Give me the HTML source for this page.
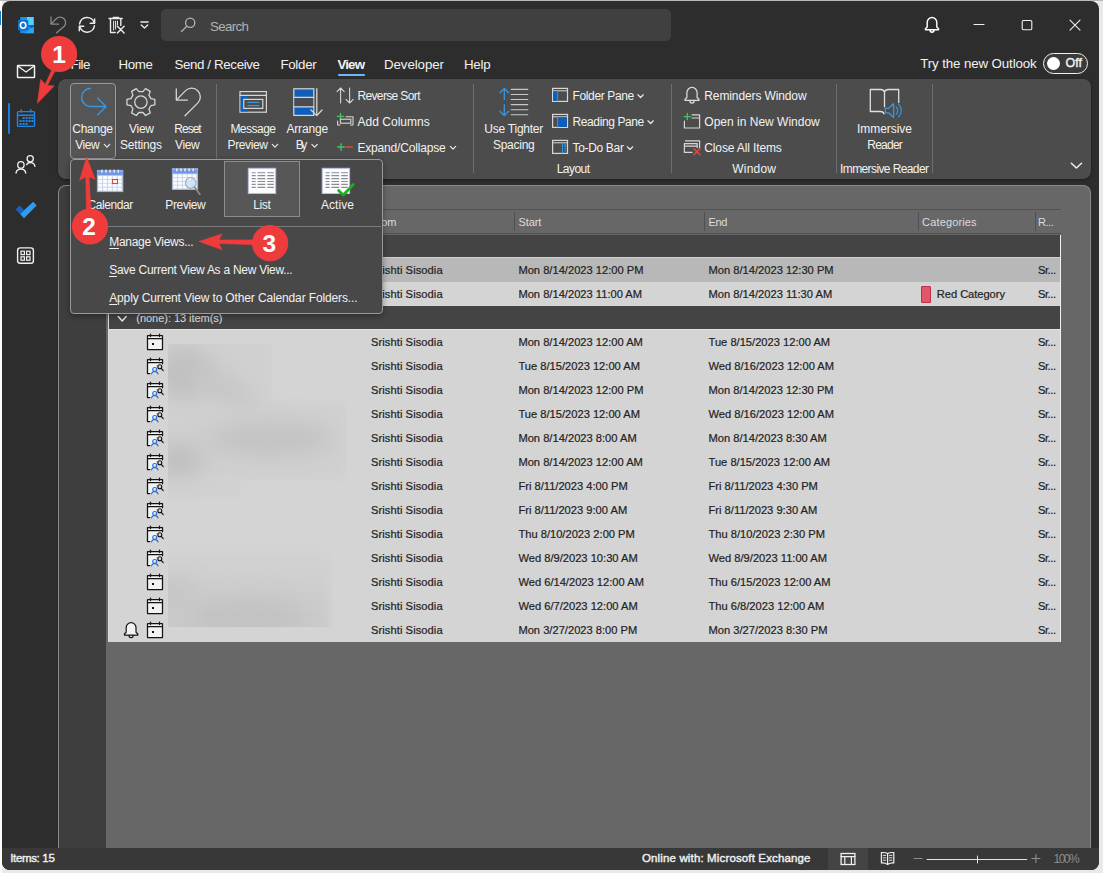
<!DOCTYPE html>
<html><head><meta charset="utf-8"><title>Outlook</title><style>
*{margin:0;padding:0;box-sizing:border-box}
html,body{width:1103px;height:873px;overflow:hidden;background:#e9e9e9;font-family:"Liberation Sans",sans-serif}
.a{position:absolute}
.t{position:absolute;white-space:pre}
u{text-decoration:underline;text-underline-offset:1.5px}
svg{position:absolute;left:0;top:0;overflow:visible}
</style></head><body>
<div class="a" style="left:0;top:0;width:2px;height:873px;background:#fdfdfd"></div>
<div class="a" style="left:0;top:11px;width:1px;height:14px;background:#1279c4"></div>
<div class="a" style="left:0;top:0;width:1103px;height:1px;background:#b9b9b9"></div>
<div class="a" style="left:2px;top:1px;width:1097px;height:869px;border-radius:8px;background:#2d2d2d;overflow:hidden">
<div class="a" style="left:-2px;top:-1px;width:1103px;height:873px">
<div class="a" style="left:58px;top:79px;width:1033px;height:100px;background:#4c4c4c;border-radius:8px;box-shadow:0 1px 3px rgba(0,0,0,.4)"></div>
<div class="a" style="left:216px;top:84px;width:1px;height:89px;background:#6e6e6e;"></div>
<div class="a" style="left:473px;top:84px;width:1px;height:89px;background:#6e6e6e;"></div>
<div class="a" style="left:671px;top:84px;width:1px;height:89px;background:#6e6e6e;"></div>
<div class="a" style="left:836px;top:84px;width:1px;height:89px;background:#6e6e6e;"></div>
<div class="a" style="left:932px;top:84px;width:1px;height:89px;background:#6e6e6e;"></div>
<div class="a" style="left:70px;top:83px;width:46px;height:76px;background:#555555;border:1px solid #9a9a9a;border-radius:4px"></div>
<div class="a" style="left:161px;top:9px;width:510px;height:32px;background:#404040;border-radius:5px"></div>
<div class="a" style="left:337.5px;top:74px;width:27.5px;height:2px;background:#6cb8f6;border-radius:1px"></div>
<div class="a" style="left:1043px;top:53px;width:45px;height:21px;background:#3a3a3a;border:1.5px solid #f0f0f0;border-radius:11px"></div>
<div class="a" style="left:1046.5px;top:57px;width:13px;height:13px;background:#ffffff;border-radius:7px"></div>
<div class="a" style="left:8px;top:102.5px;width:2px;height:31px;background:#1a7fdc;border-radius:1px"></div>
<div class="a" style="left:58px;top:185px;width:1033px;height:664px;background:#676767;border:1px solid #8a8a8a;border-bottom:none;border-radius:8px 8px 0 0"></div>
<div class="a" style="left:59px;top:196px;width:47px;height:652px;background:#3e3e3e;"></div>
<div class="a" style="left:59px;top:186px;width:47px;height:20px;background:#3e3e3e;border-radius:7px 0 0 0"></div>
<div class="a" style="left:108px;top:209px;width:953px;height:1px;background:#505050;"></div>
<div class="a" style="left:108px;top:233px;width:953px;height:1px;background:#505050;"></div>
<div class="a" style="left:366.5px;top:212px;width:1px;height:19px;background:#505050;"></div>
<div class="a" style="left:514px;top:212px;width:1px;height:19px;background:#505050;"></div>
<div class="a" style="left:704px;top:212px;width:1px;height:19px;background:#505050;"></div>
<div class="a" style="left:918px;top:212px;width:1px;height:19px;background:#505050;"></div>
<div class="a" style="left:1035px;top:212px;width:1px;height:19px;background:#505050;"></div>
<div class="a" style="left:108px;top:235px;width:953px;height:22px;background:#444444;"></div>
<div class="a" style="left:108px;top:257px;width:953px;height:25px;background:#b8b8b8;"></div>
<div class="a" style="left:108px;top:257px;width:953px;height:1px;background:#cfcfcf;"></div>
<div class="a" style="left:108px;top:282px;width:953px;height:24px;background:#d4d4d4;"></div>
<div class="a" style="left:108px;top:306px;width:953px;height:23px;background:#444444;"></div>
<div class="a" style="left:108px;top:329px;width:953px;height:313px;background:#d4d4d4;"></div>
<div class="a" style="left:108px;top:329px;width:953px;height:1px;background:#e2e2e2;"></div>
<div class="a" style="left:108px;top:235px;width:1px;height:407px;background:#dcdcdc;"></div>
<div class="a" style="left:1060px;top:235px;width:1px;height:407px;background:#f0f0f0;"></div>
<div class="a" style="left:921px;top:286px;width:10px;height:17px;background:#e2566a;border:1px solid #c22f4a;border-radius:1px"></div>
<div class="a" style="left:2px;top:848px;width:1097px;height:23px;background:#383838;"></div>
<div class="a" style="left:828px;top:848px;width:40px;height:23px;background:#444444;"></div>
<div class="a" style="left:168px;top:344px;width:180px;height:157px;overflow:hidden">
<div class="a" style="left:-10px;top:-10px;width:114px;height:80px;background:#d0d0d0;filter:blur(3px)"></div>
<div class="a" style="left:-10px;top:58px;width:188px;height:78px;background:#d0d0d0;filter:blur(3px)"></div>
<div class="a" style="left:-10px;top:130px;width:82px;height:25px;background:#d1d1d1;filter:blur(3px)"></div>
<div class="a" style="left:-12px;top:4px;width:56px;height:50px;background:#bfbfbf;filter:blur(10px);border-radius:50%"></div>
<div class="a" style="left:10px;top:28px;width:80px;height:26px;background:#c6c6c6;filter:blur(10px);border-radius:50%;transform:rotate(24deg)"></div>
<div class="a" style="left:40px;top:80px;width:125px;height:30px;background:#c1c1c1;filter:blur(11px);border-radius:50%"></div>
<div class="a" style="left:-14px;top:98px;width:50px;height:36px;background:#c0c0c0;filter:blur(10px);border-radius:50%"></div>
</div>
<div class="a" style="left:168px;top:540px;width:165px;height:87px;overflow:hidden">
<div class="a" style="left:-10px;top:6px;width:172px;height:100px;background:linear-gradient(#d3d3d3,#cdcdcd 50%,#c9c9c9);filter:blur(3px)"></div>
<div class="a" style="left:20px;top:58px;width:120px;height:40px;background:#c2c2c2;filter:blur(11px);border-radius:50%"></div>
<div class="a" style="left:-16px;top:36px;width:44px;height:40px;background:#c6c6c6;filter:blur(10px);border-radius:50%"></div>
</div>
<span class="t" style="left:210.0px;top:17.89px;font-size:13.3px;line-height:17px;color:#b2b2b2;letter-spacing:-0.628px">Search</span>
<span class="t" style="left:70.6px;top:56.19px;font-size:13.3px;line-height:17px;color:#f2f2f2;letter-spacing:-0.546px">File</span>
<span class="t" style="left:118.6px;top:56.19px;font-size:13.3px;line-height:17px;color:#f2f2f2;letter-spacing:-0.361px">Home</span>
<span class="t" style="left:174.4px;top:56.19px;font-size:13.3px;line-height:17px;color:#f2f2f2;letter-spacing:-0.353px">Send / Receive</span>
<span class="t" style="left:280.4px;top:56.19px;font-size:13.3px;line-height:17px;color:#f2f2f2;letter-spacing:-0.281px">Folder</span>
<span class="t" style="left:337.4px;top:56.19px;font-size:13.3px;line-height:17px;color:#f2f2f2;letter-spacing:-0.821px;font-weight:700">View</span>
<span class="t" style="left:384.0px;top:56.19px;font-size:13.3px;line-height:17px;color:#f2f2f2;letter-spacing:-0.076px">Developer</span>
<span class="t" style="left:464.0px;top:56.19px;font-size:13.3px;line-height:17px;color:#f2f2f2;letter-spacing:-0.253px">Help</span>
<span class="t" style="left:920.3px;top:54.69px;font-size:13.3px;line-height:17px;color:#f2f2f2;letter-spacing:-0.117px">Try the new Outlook</span>
<span class="t" style="left:1065.5px;top:55.47px;font-size:12.5px;line-height:16px;color:#f2f2f2;letter-spacing:0.023px;-webkit-text-stroke:0.4px #f2f2f2">Off</span>
<span class="t" style="left:72.3px;top:120.64px;font-size:12px;line-height:16px;color:#f2f2f2;letter-spacing:-0.269px">Change</span>
<span class="t" style="left:75.3px;top:136.54px;font-size:12px;line-height:16px;color:#f2f2f2;letter-spacing:-0.466px">View</span>
<span class="t" style="left:129.0px;top:120.64px;font-size:12px;line-height:16px;color:#f2f2f2;letter-spacing:-0.266px">View</span>
<span class="t" style="left:120.0px;top:136.54px;font-size:12px;line-height:16px;color:#f2f2f2;letter-spacing:-0.194px">Settings</span>
<span class="t" style="left:174.3px;top:120.64px;font-size:12px;line-height:16px;color:#f2f2f2;letter-spacing:-0.990px">Reset</span>
<span class="t" style="left:175.0px;top:136.54px;font-size:12px;line-height:16px;color:#f2f2f2;letter-spacing:-0.399px">View</span>
<span class="t" style="left:230.4px;top:120.64px;font-size:12px;line-height:16px;color:#f2f2f2;letter-spacing:-0.517px">Message</span>
<span class="t" style="left:227.6px;top:136.54px;font-size:12px;line-height:16px;color:#f2f2f2;letter-spacing:-0.398px">Preview</span>
<span class="t" style="left:286.4px;top:120.64px;font-size:12px;line-height:16px;color:#f2f2f2;letter-spacing:-0.134px">Arrange</span>
<span class="t" style="left:295.7px;top:136.54px;font-size:12px;line-height:16px;color:#f2f2f2;letter-spacing:-2.416px">By</span>
<span class="t" style="left:357.4px;top:87.94px;font-size:12px;line-height:16px;color:#f2f2f2;letter-spacing:-0.630px">Reverse Sort</span>
<span class="t" style="left:357.4px;top:113.74px;font-size:12px;line-height:16px;color:#f2f2f2;letter-spacing:0.035px">Add Columns</span>
<span class="t" style="left:357.4px;top:139.74px;font-size:12px;line-height:16px;color:#f2f2f2;letter-spacing:-0.167px">Expand/Collapse</span>
<span class="t" style="left:484.3px;top:120.64px;font-size:12px;line-height:16px;color:#f2f2f2;letter-spacing:-0.236px">Use Tighter</span>
<span class="t" style="left:492.9px;top:136.54px;font-size:12px;line-height:16px;color:#f2f2f2;letter-spacing:-0.246px">Spacing</span>
<span class="t" style="left:572.5px;top:87.84px;font-size:12px;line-height:16px;color:#f2f2f2;letter-spacing:-0.367px">Folder Pane</span>
<span class="t" style="left:572.5px;top:113.84px;font-size:12px;line-height:16px;color:#f2f2f2;letter-spacing:-0.388px">Reading Pane</span>
<span class="t" style="left:572.5px;top:139.94px;font-size:12px;line-height:16px;color:#f2f2f2;letter-spacing:-0.329px">To-Do Bar</span>
<span class="t" style="left:556.7px;top:161.04px;font-size:12px;line-height:16px;color:#f2f2f2;letter-spacing:-0.546px">Layout</span>
<span class="t" style="left:704.3px;top:87.84px;font-size:12px;line-height:16px;color:#f2f2f2;letter-spacing:-0.116px">Reminders Window</span>
<span class="t" style="left:704.3px;top:113.84px;font-size:12px;line-height:16px;color:#f2f2f2;letter-spacing:0.006px">Open in New Window</span>
<span class="t" style="left:704.3px;top:139.84px;font-size:12px;line-height:16px;color:#f2f2f2;letter-spacing:-0.133px">Close All Items</span>
<span class="t" style="left:732.3px;top:161.04px;font-size:12px;line-height:16px;color:#f2f2f2;letter-spacing:0.203px">Window</span>
<span class="t" style="left:857.0px;top:120.84px;font-size:12px;line-height:16px;color:#f2f2f2;letter-spacing:-0.043px">Immersive</span>
<span class="t" style="left:867.3px;top:136.64px;font-size:12px;line-height:16px;color:#f2f2f2;letter-spacing:-0.772px">Reader</span>
<span class="t" style="left:840.0px;top:161.04px;font-size:12px;line-height:16px;color:#f2f2f2;letter-spacing:-0.602px">Immersive Reader</span>
<span class="t" style="left:371.0px;top:214.69px;font-size:11px;line-height:14px;color:#dcdcdc;letter-spacing:-0.124px">From</span>
<span class="t" style="left:518.4px;top:214.69px;font-size:11px;line-height:14px;color:#dcdcdc;letter-spacing:-0.059px">Start</span>
<span class="t" style="left:708.5px;top:214.69px;font-size:11px;line-height:14px;color:#dcdcdc;letter-spacing:-0.339px">End</span>
<span class="t" style="left:922.1px;top:214.69px;font-size:11px;line-height:14px;color:#dcdcdc;letter-spacing:0.144px">Categories</span>
<span class="t" style="left:1038.0px;top:214.69px;font-size:11px;line-height:14px;color:#dcdcdc;letter-spacing:-0.475px">R...</span>
<span class="t" style="left:136.3px;top:310.99px;font-size:11px;line-height:14px;color:#e4e4e4;letter-spacing:-0.036px">(none): 13 item(s)</span>
<span class="t" style="left:371.0px;top:262.84px;font-size:11.15px;line-height:14px;color:#222222;letter-spacing:0.072px;-webkit-text-stroke:0.2px #222222">Srishti Sisodia</span>
<span class="t" style="left:518.4px;top:262.84px;font-size:11.15px;line-height:14px;color:#222222;letter-spacing:-0.000px;-webkit-text-stroke:0.2px #222222">Mon 8/14/2023 12:00 PM</span>
<span class="t" style="left:708.5px;top:262.84px;font-size:11.15px;line-height:14px;color:#222222;letter-spacing:-0.000px;-webkit-text-stroke:0.2px #222222">Mon 8/14/2023 12:30 PM</span>
<span class="t" style="left:1038.0px;top:262.84px;font-size:11.15px;line-height:14px;color:#222222;letter-spacing:-0.453px;-webkit-text-stroke:0.2px #222222">Sr...</span>
<span class="t" style="left:371.0px;top:286.74px;font-size:11.15px;line-height:14px;color:#222222;letter-spacing:0.072px;-webkit-text-stroke:0.2px #222222">Srishti Sisodia</span>
<span class="t" style="left:518.4px;top:286.74px;font-size:11.15px;line-height:14px;color:#222222;letter-spacing:-0.000px;-webkit-text-stroke:0.2px #222222">Mon 8/14/2023 11:00 AM</span>
<span class="t" style="left:708.5px;top:286.74px;font-size:11.15px;line-height:14px;color:#222222;letter-spacing:-0.000px;-webkit-text-stroke:0.2px #222222">Mon 8/14/2023 11:30 AM</span>
<span class="t" style="left:1038.0px;top:286.74px;font-size:11.15px;line-height:14px;color:#222222;letter-spacing:-0.453px;-webkit-text-stroke:0.2px #222222">Sr...</span>
<span class="t" style="left:371.0px;top:334.84px;font-size:11.15px;line-height:14px;color:#222222;letter-spacing:0.072px;-webkit-text-stroke:0.2px #222222">Srishti Sisodia</span>
<span class="t" style="left:518.4px;top:334.84px;font-size:11.15px;line-height:14px;color:#222222;letter-spacing:-0.000px;-webkit-text-stroke:0.2px #222222">Mon 8/14/2023 12:00 AM</span>
<span class="t" style="left:708.5px;top:334.84px;font-size:11.15px;line-height:14px;color:#222222;letter-spacing:-0.000px;-webkit-text-stroke:0.2px #222222">Tue 8/15/2023 12:00 AM</span>
<span class="t" style="left:1038.0px;top:334.84px;font-size:11.15px;line-height:14px;color:#222222;letter-spacing:-0.453px;-webkit-text-stroke:0.2px #222222">Sr...</span>
<span class="t" style="left:371.0px;top:358.84px;font-size:11.15px;line-height:14px;color:#222222;letter-spacing:0.072px;-webkit-text-stroke:0.2px #222222">Srishti Sisodia</span>
<span class="t" style="left:518.4px;top:358.84px;font-size:11.15px;line-height:14px;color:#222222;letter-spacing:-0.000px;-webkit-text-stroke:0.2px #222222">Tue 8/15/2023 12:00 AM</span>
<span class="t" style="left:708.5px;top:358.84px;font-size:11.15px;line-height:14px;color:#222222;letter-spacing:-0.000px;-webkit-text-stroke:0.2px #222222">Wed 8/16/2023 12:00 AM</span>
<span class="t" style="left:1038.0px;top:358.84px;font-size:11.15px;line-height:14px;color:#222222;letter-spacing:-0.453px;-webkit-text-stroke:0.2px #222222">Sr...</span>
<span class="t" style="left:371.0px;top:382.84px;font-size:11.15px;line-height:14px;color:#222222;letter-spacing:0.072px;-webkit-text-stroke:0.2px #222222">Srishti Sisodia</span>
<span class="t" style="left:518.4px;top:382.84px;font-size:11.15px;line-height:14px;color:#222222;letter-spacing:-0.000px;-webkit-text-stroke:0.2px #222222">Mon 8/14/2023 12:00 PM</span>
<span class="t" style="left:708.5px;top:382.84px;font-size:11.15px;line-height:14px;color:#222222;letter-spacing:-0.000px;-webkit-text-stroke:0.2px #222222">Mon 8/14/2023 12:30 PM</span>
<span class="t" style="left:1038.0px;top:382.84px;font-size:11.15px;line-height:14px;color:#222222;letter-spacing:-0.453px;-webkit-text-stroke:0.2px #222222">Sr...</span>
<span class="t" style="left:371.0px;top:406.84px;font-size:11.15px;line-height:14px;color:#222222;letter-spacing:0.072px;-webkit-text-stroke:0.2px #222222">Srishti Sisodia</span>
<span class="t" style="left:518.4px;top:406.84px;font-size:11.15px;line-height:14px;color:#222222;letter-spacing:-0.000px;-webkit-text-stroke:0.2px #222222">Tue 8/15/2023 12:00 AM</span>
<span class="t" style="left:708.5px;top:406.84px;font-size:11.15px;line-height:14px;color:#222222;letter-spacing:-0.000px;-webkit-text-stroke:0.2px #222222">Wed 8/16/2023 12:00 AM</span>
<span class="t" style="left:1038.0px;top:406.84px;font-size:11.15px;line-height:14px;color:#222222;letter-spacing:-0.453px;-webkit-text-stroke:0.2px #222222">Sr...</span>
<span class="t" style="left:371.0px;top:430.84px;font-size:11.15px;line-height:14px;color:#222222;letter-spacing:0.072px;-webkit-text-stroke:0.2px #222222">Srishti Sisodia</span>
<span class="t" style="left:518.4px;top:430.84px;font-size:11.15px;line-height:14px;color:#222222;letter-spacing:-0.000px;-webkit-text-stroke:0.2px #222222">Mon 8/14/2023 8:00 AM</span>
<span class="t" style="left:708.5px;top:430.84px;font-size:11.15px;line-height:14px;color:#222222;letter-spacing:-0.000px;-webkit-text-stroke:0.2px #222222">Mon 8/14/2023 8:30 AM</span>
<span class="t" style="left:1038.0px;top:430.84px;font-size:11.15px;line-height:14px;color:#222222;letter-spacing:-0.453px;-webkit-text-stroke:0.2px #222222">Sr...</span>
<span class="t" style="left:371.0px;top:454.84px;font-size:11.15px;line-height:14px;color:#222222;letter-spacing:0.072px;-webkit-text-stroke:0.2px #222222">Srishti Sisodia</span>
<span class="t" style="left:518.4px;top:454.84px;font-size:11.15px;line-height:14px;color:#222222;letter-spacing:-0.000px;-webkit-text-stroke:0.2px #222222">Mon 8/14/2023 12:00 AM</span>
<span class="t" style="left:708.5px;top:454.84px;font-size:11.15px;line-height:14px;color:#222222;letter-spacing:-0.000px;-webkit-text-stroke:0.2px #222222">Tue 8/15/2023 12:00 AM</span>
<span class="t" style="left:1038.0px;top:454.84px;font-size:11.15px;line-height:14px;color:#222222;letter-spacing:-0.453px;-webkit-text-stroke:0.2px #222222">Sr...</span>
<span class="t" style="left:371.0px;top:478.84px;font-size:11.15px;line-height:14px;color:#222222;letter-spacing:0.072px;-webkit-text-stroke:0.2px #222222">Srishti Sisodia</span>
<span class="t" style="left:518.4px;top:478.84px;font-size:11.15px;line-height:14px;color:#222222;letter-spacing:-0.000px;-webkit-text-stroke:0.2px #222222">Fri 8/11/2023 4:00 PM</span>
<span class="t" style="left:708.5px;top:478.84px;font-size:11.15px;line-height:14px;color:#222222;letter-spacing:-0.000px;-webkit-text-stroke:0.2px #222222">Fri 8/11/2023 4:30 PM</span>
<span class="t" style="left:1038.0px;top:478.84px;font-size:11.15px;line-height:14px;color:#222222;letter-spacing:-0.453px;-webkit-text-stroke:0.2px #222222">Sr...</span>
<span class="t" style="left:371.0px;top:502.84px;font-size:11.15px;line-height:14px;color:#222222;letter-spacing:0.072px;-webkit-text-stroke:0.2px #222222">Srishti Sisodia</span>
<span class="t" style="left:518.4px;top:502.84px;font-size:11.15px;line-height:14px;color:#222222;letter-spacing:-0.000px;-webkit-text-stroke:0.2px #222222">Fri 8/11/2023 9:00 AM</span>
<span class="t" style="left:708.5px;top:502.84px;font-size:11.15px;line-height:14px;color:#222222;letter-spacing:-0.000px;-webkit-text-stroke:0.2px #222222">Fri 8/11/2023 9:30 AM</span>
<span class="t" style="left:1038.0px;top:502.84px;font-size:11.15px;line-height:14px;color:#222222;letter-spacing:-0.453px;-webkit-text-stroke:0.2px #222222">Sr...</span>
<span class="t" style="left:371.0px;top:526.84px;font-size:11.15px;line-height:14px;color:#222222;letter-spacing:0.072px;-webkit-text-stroke:0.2px #222222">Srishti Sisodia</span>
<span class="t" style="left:518.4px;top:526.84px;font-size:11.15px;line-height:14px;color:#222222;letter-spacing:-0.000px;-webkit-text-stroke:0.2px #222222">Thu 8/10/2023 2:00 PM</span>
<span class="t" style="left:708.5px;top:526.84px;font-size:11.15px;line-height:14px;color:#222222;letter-spacing:-0.000px;-webkit-text-stroke:0.2px #222222">Thu 8/10/2023 2:30 PM</span>
<span class="t" style="left:1038.0px;top:526.84px;font-size:11.15px;line-height:14px;color:#222222;letter-spacing:-0.453px;-webkit-text-stroke:0.2px #222222">Sr...</span>
<span class="t" style="left:371.0px;top:550.84px;font-size:11.15px;line-height:14px;color:#222222;letter-spacing:0.072px;-webkit-text-stroke:0.2px #222222">Srishti Sisodia</span>
<span class="t" style="left:518.4px;top:550.84px;font-size:11.15px;line-height:14px;color:#222222;letter-spacing:-0.000px;-webkit-text-stroke:0.2px #222222">Wed 8/9/2023 10:30 AM</span>
<span class="t" style="left:708.5px;top:550.84px;font-size:11.15px;line-height:14px;color:#222222;letter-spacing:-0.000px;-webkit-text-stroke:0.2px #222222">Wed 8/9/2023 11:00 AM</span>
<span class="t" style="left:1038.0px;top:550.84px;font-size:11.15px;line-height:14px;color:#222222;letter-spacing:-0.453px;-webkit-text-stroke:0.2px #222222">Sr...</span>
<span class="t" style="left:371.0px;top:574.84px;font-size:11.15px;line-height:14px;color:#222222;letter-spacing:0.072px;-webkit-text-stroke:0.2px #222222">Srishti Sisodia</span>
<span class="t" style="left:518.4px;top:574.84px;font-size:11.15px;line-height:14px;color:#222222;letter-spacing:-0.000px;-webkit-text-stroke:0.2px #222222">Wed 6/14/2023 12:00 AM</span>
<span class="t" style="left:708.5px;top:574.84px;font-size:11.15px;line-height:14px;color:#222222;letter-spacing:-0.000px;-webkit-text-stroke:0.2px #222222">Thu 6/15/2023 12:00 AM</span>
<span class="t" style="left:1038.0px;top:574.84px;font-size:11.15px;line-height:14px;color:#222222;letter-spacing:-0.453px;-webkit-text-stroke:0.2px #222222">Sr...</span>
<span class="t" style="left:371.0px;top:598.84px;font-size:11.15px;line-height:14px;color:#222222;letter-spacing:0.072px;-webkit-text-stroke:0.2px #222222">Srishti Sisodia</span>
<span class="t" style="left:518.4px;top:598.84px;font-size:11.15px;line-height:14px;color:#222222;letter-spacing:-0.000px;-webkit-text-stroke:0.2px #222222">Wed 6/7/2023 12:00 AM</span>
<span class="t" style="left:708.5px;top:598.84px;font-size:11.15px;line-height:14px;color:#222222;letter-spacing:-0.000px;-webkit-text-stroke:0.2px #222222">Thu 6/8/2023 12:00 AM</span>
<span class="t" style="left:1038.0px;top:598.84px;font-size:11.15px;line-height:14px;color:#222222;letter-spacing:-0.453px;-webkit-text-stroke:0.2px #222222">Sr...</span>
<span class="t" style="left:371.0px;top:622.84px;font-size:11.15px;line-height:14px;color:#222222;letter-spacing:0.072px;-webkit-text-stroke:0.2px #222222">Srishti Sisodia</span>
<span class="t" style="left:518.4px;top:622.84px;font-size:11.15px;line-height:14px;color:#222222;letter-spacing:-0.000px;-webkit-text-stroke:0.2px #222222">Mon 3/27/2023 8:00 PM</span>
<span class="t" style="left:708.5px;top:622.84px;font-size:11.15px;line-height:14px;color:#222222;letter-spacing:-0.000px;-webkit-text-stroke:0.2px #222222">Mon 3/27/2023 8:30 PM</span>
<span class="t" style="left:1038.0px;top:622.84px;font-size:11.15px;line-height:14px;color:#222222;letter-spacing:-0.453px;-webkit-text-stroke:0.2px #222222">Sr...</span>
<span class="t" style="left:936.8px;top:286.74px;font-size:11.15px;line-height:14px;color:#222222;letter-spacing:-0.050px;-webkit-text-stroke:0.2px #222222">Red Category</span>
<span class="t" style="left:10.2px;top:851.42px;font-size:11.5px;line-height:15px;color:#f0f0f0;letter-spacing:-0.339px;-webkit-text-stroke:0.4px #f0f0f0">Items: 15</span>
<span class="t" style="left:642.0px;top:851.42px;font-size:11.5px;line-height:15px;color:#f0f0f0;letter-spacing:0.141px;-webkit-text-stroke:0.4px #f0f0f0">Online with: Microsoft Exchange</span>
<span class="t" style="left:1053.5px;top:850.74px;font-size:12px;line-height:16px;color:#8c8c8c;letter-spacing:-1.534px">100%</span>
<svg width="1103" height="873" viewBox="0 0 1103 873" fill="none">
<rect x="20.2" y="17" width="6.8" height="8.4" fill="#1b92e2" stroke="none" stroke-width="1" rx="0" />
<rect x="27" y="17" width="6.8" height="8.4" fill="#4fd4ff" stroke="none" stroke-width="1" rx="0" />
<rect x="20.2" y="25.4" width="13.6" height="7.8" fill="#1c8ee2" stroke="none" stroke-width="1" rx="0" />
<path d="M27 25.4 L33.8 25.4 L33.8 28.6 Z" fill="#0a55b4"/>
<path d="M33.8 26.4 L33.8 33.2 L24.5 33.2 Z" fill="#2ba6f0"/>
<rect x="17.9" y="20" width="10.4" height="10.4" fill="#0f70cf" stroke="none" stroke-width="1" rx="0.9" />
<ellipse cx="23.1" cy="25.2" rx="2.7" ry="3" fill="none" stroke="#ffffff" stroke-width="1.6"/>
<path d="M51 17 V24.1 H58.6 M51.2 23.9 L56.2 18.8 A5.5 5.5 0 0 1 64 26.6 L56.6 32.8" stroke="#8a8a8a" stroke-width="1.3" fill="none" stroke-linecap="round" stroke-linejoin="round" />
<path d="M79.6 23.9 A7.5 7.5 0 0 1 94.3 23.1 M94.4 25.8 A7.5 7.5 0 0 1 79.7 26.5" stroke="#ececec" stroke-width="1.5" fill="none" stroke-linecap="round" stroke-linejoin="round" />
<path d="M94.6 19 V23.3 H90.2 M79.3 30.7 V26.3 H83.7" stroke="#ececec" stroke-width="1.5" fill="none" stroke-linecap="round" stroke-linejoin="round" stroke-linecap="butt"/>
<path d="M109 18.5 H122.2 M113.2 17.4 H118.6 M110.5 18.7 V32.5 H115.2 M120.8 18.7 V25.6" stroke="#ececec" stroke-width="1.4" fill="none" stroke-linecap="round" stroke-linejoin="round" />
<path d="M113.6 21.2 V30 M115.6 21.2 V29 M117.5 21.2 V25" stroke="#ececec" stroke-width="1.0" fill="none" stroke-linecap="round" stroke-linejoin="round" />
<path d="M117.4 26.2 L124.1 32.9 M124.1 26.2 L117.4 32.9" stroke="#ececec" stroke-width="1.4" fill="none" stroke-linecap="round" stroke-linejoin="round" />
<path d="M140.9 22 H148.1" stroke="#e8e8e8" stroke-width="1.4" fill="none" stroke-linecap="round" stroke-linejoin="round" />
<path d="M141.3 25 L144.5 28 L147.7 25" stroke="#e8e8e8" stroke-width="1.4" fill="none" stroke-linecap="round" stroke-linejoin="round" />
<circle cx="190.2" cy="22.8" r="4.6" fill="none" stroke="#b4b4b4" stroke-width="1.3"/>
<path d="M186.8 26.2 L181.5 31.5" stroke="#b4b4b4" stroke-width="1.3" fill="none" stroke-linecap="round" stroke-linejoin="round" />
<path d="M927.198 26.992 V22.386000000000003 A4.8020000000000005 4.9 0 0 1 936.802 22.386000000000003 V26.992 L938.566 28.658 V29.736 H925.434 V28.658 Z M930.04 30.324 A1.96 1.8619999999999999 0 0 0 933.96 30.324" stroke="#ffffff" stroke-width="1.45" fill="none" stroke-linecap="round" stroke-linejoin="round" />
<path d="M974 24.5 H984" stroke="#f0f0f0" stroke-width="1.1" fill="none" stroke-linecap="round" stroke-linejoin="round" />
<rect x="1022.2" y="20.5" width="9.6" height="9.2" fill="none" stroke="#f0f0f0" stroke-width="1.1" rx="1.2" />
<path d="M1070 20.1 L1080 30.1 M1080 20.1 L1070 30.1" stroke="#f0f0f0" stroke-width="1.1" fill="none" stroke-linecap="round" stroke-linejoin="round" />
<rect x="17.5" y="65.5" width="17" height="12" fill="none" stroke="#f0f0f0" stroke-width="1.5" rx="0.5" />
<path d="M17.8 66 L26 72 L34.2 66" stroke="#f0f0f0" stroke-width="1.4" fill="none" stroke-linecap="round" stroke-linejoin="round" />
<rect x="17.5" y="111.6" width="17" height="14.8" fill="none" stroke="#1e86e4" stroke-width="1.4" rx="0.8" />
<path d="M17.5 115.2 H34.5 M21.2 109.8 V112 M30.8 109.8 V112" stroke="#1e86e4" stroke-width="1.4" fill="none" stroke-linecap="round" stroke-linejoin="round" />
<rect x="22.6" y="117" width="2" height="2" fill="#1e86e4" stroke="none" stroke-width="1" rx="0" />
<rect x="25.6" y="117" width="2" height="2" fill="#1e86e4" stroke="none" stroke-width="1" rx="0" />
<rect x="28.6" y="117" width="2" height="2" fill="#1e86e4" stroke="none" stroke-width="1" rx="0" />
<rect x="31.4" y="117" width="2" height="2" fill="#1e86e4" stroke="none" stroke-width="1" rx="0" />
<rect x="19.6" y="120" width="2" height="2" fill="#1e86e4" stroke="none" stroke-width="1" rx="0" />
<rect x="22.6" y="120" width="2" height="2" fill="#1e86e4" stroke="none" stroke-width="1" rx="0" />
<rect x="25.6" y="120" width="2" height="2" fill="#1e86e4" stroke="none" stroke-width="1" rx="0" />
<rect x="28.6" y="120" width="2" height="2" fill="#1e86e4" stroke="none" stroke-width="1" rx="0" />
<rect x="31.4" y="120" width="2" height="2" fill="#1e86e4" stroke="none" stroke-width="1" rx="0" />
<rect x="19.6" y="123" width="2" height="2" fill="#1e86e4" stroke="none" stroke-width="1" rx="0" />
<rect x="22.6" y="123" width="2" height="2" fill="#1e86e4" stroke="none" stroke-width="1" rx="0" />
<rect x="25.6" y="123" width="2" height="2" fill="#1e86e4" stroke="none" stroke-width="1" rx="0" />
<circle cx="30.2" cy="158.8" r="3.1" fill="none" stroke="#f0f0f0" stroke-width="1.3"/>
<path d="M26.6 164.6 A4.6 4.6 0 0 1 35 166.4" stroke="#f0f0f0" stroke-width="1.3" fill="none" stroke-linecap="round" stroke-linejoin="round" />
<circle cx="20.9" cy="164.9" r="3.2" fill="none" stroke="#f0f0f0" stroke-width="1.3"/>
<path d="M16 173 A5 5 0 0 1 25.8 173" stroke="#f0f0f0" stroke-width="1.3" fill="none" stroke-linecap="round" stroke-linejoin="round" />
<path d="M15.6 209.5 L19.5 205.6 L24 210.1 L20.1 214 Z" fill="#1b5fc4"/>
<path d="M20.1 214 L33.2 201.8 L36.6 205.5 L24 218.3 Z" fill="#2f9cf2"/>
<rect x="17.6" y="247.9" width="15.8" height="15.4" fill="none" stroke="#f0f0f0" stroke-width="1.4" rx="2.6" />
<rect x="21" y="251.2" width="3.4" height="3.4" fill="none" stroke="#f0f0f0" stroke-width="1.2" rx="0" />
<rect x="26.6" y="251.2" width="3.4" height="3.4" fill="none" stroke="#f0f0f0" stroke-width="1.2" rx="0" />
<rect x="21" y="256.8" width="3.4" height="3.4" fill="none" stroke="#f0f0f0" stroke-width="1.2" rx="0" />
<rect x="26.6" y="256.8" width="3.4" height="3.4" fill="none" stroke="#f0f0f0" stroke-width="1.2" rx="0" />
<path d="M90.5 88.2 A9.2 9.2 0 0 0 89.6 106.5 H105.8 M97.6 98 L106 106.5 L97.6 115" stroke="#3a96dd" stroke-width="1.4" fill="none" stroke-linecap="round" stroke-linejoin="round" />
<path d="M142.92 91.69 L145.52 88.67 L150.22 91.38 L148.90 95.15 L150.92 98.65 L154.84 99.39 L154.84 104.81 L150.92 105.55 L148.90 109.05 L150.22 112.82 L145.52 115.53 L142.92 112.51 L138.88 112.51 L136.28 115.53 L131.58 112.82 L132.90 109.05 L130.88 105.55 L126.96 104.81 L126.96 99.39 L130.88 98.65 L132.90 95.15 L131.58 91.38 L136.28 88.67 L138.88 91.69 Z" stroke="#d6d6d6" stroke-width="1.3" fill="none" stroke-linecap="round" stroke-linejoin="round" /><circle cx="140.9" cy="102.1" r="6.2" fill="none" stroke="#d6d6d6" stroke-width="1.3"/>
<path d="M176.3 89 V100.1 H187.4 M176.5 99.9 L185.6 90.6 A8.7 8.7 0 0 1 197.9 102.9 L185 115.7" stroke="#d6d6d6" stroke-width="1.3" fill="none" stroke-linecap="round" stroke-linejoin="round" />
<rect x="240" y="91.6" width="26.4" height="20.6" fill="none" stroke="#d6d6d6" stroke-width="1.2" rx="0" />
<path d="M240 95.4 H266.4" stroke="#d6d6d6" stroke-width="1.2" fill="none" stroke-linecap="round" stroke-linejoin="round" />
<rect x="240.6" y="96" width="7" height="15.6" fill="#0f62be" stroke="none" stroke-width="1" rx="0" />
<rect x="243.8" y="99.4" width="19" height="9" fill="#4c4c4c" stroke="#d6d6d6" stroke-width="1.2" rx="0" />
<path d="M247.8 102.4 H259 M247.8 105.6 H259" stroke="#3a96dd" stroke-width="1.2" fill="none" stroke-linecap="round" stroke-linejoin="round" />
<rect x="293.8" y="88.8" width="20" height="26.6" fill="#0f5fba" stroke="#d6d6d6" stroke-width="1.2" rx="0" />
<rect x="294.4" y="97.8" width="18.8" height="8.6" fill="#4c4c4c" stroke="none" stroke-width="1" rx="0" />
<path d="M293.8 97.4 H313.8 M293.8 106.8 H313.8" stroke="#d6d6d6" stroke-width="1.2" fill="none" stroke-linecap="round" stroke-linejoin="round" />
<path d="M316.8 88.6 V115.4 M311 110 L316.8 115.6 L322 110" stroke="#d6d6d6" stroke-width="1.3" fill="none" stroke-linecap="round" stroke-linejoin="round" />
<path d="M340.6 88 V103 M337 91.6 L340.6 88 L344.2 91.6 M349.6 88 V103 M346 99.4 L349.6 103 L353.2 99.4" stroke="#d6d6d6" stroke-width="1.1" fill="none" stroke-linecap="round" stroke-linejoin="round" />
<path d="M337.4 116.4 H343.6 M340.5 113.4 V119.6" stroke="#46c463" stroke-width="1.3" fill="none" stroke-linecap="round" stroke-linejoin="round" />
<rect x="340.4" y="119.2" width="10.4" height="4" fill="none" stroke="#d6d6d6" stroke-width="1.1" rx="0" />
<path d="M337.6 121 V125 H340 M346 116.8 H353 V125 H350.5" stroke="#d6d6d6" stroke-width="1.1" fill="none" stroke-linecap="round" stroke-linejoin="round" />
<path d="M337.6 147 H344.4 M341 143.6 V150.4" stroke="#46c463" stroke-width="1.3" fill="none" stroke-linecap="round" stroke-linejoin="round" />
<path d="M346 147 H352.4" stroke="#e2493f" stroke-width="1.3" fill="none" stroke-linecap="round" stroke-linejoin="round" />
<path d="M104.3 144.39999999999998 L107 147.1 L109.7 144.39999999999998" stroke="#e6e6e6" stroke-width="1.25" fill="none" stroke-linecap="round" stroke-linejoin="round" />
<path d="M272.3 144.39999999999998 L275 147.1 L277.7 144.39999999999998" stroke="#e6e6e6" stroke-width="1.25" fill="none" stroke-linecap="round" stroke-linejoin="round" />
<path d="M311.90000000000003 144.39999999999998 L314.6 147.1 L317.3 144.39999999999998" stroke="#e6e6e6" stroke-width="1.25" fill="none" stroke-linecap="round" stroke-linejoin="round" />
<path d="M450.3 146.39999999999998 L453 149.1 L455.7 146.39999999999998" stroke="#e6e6e6" stroke-width="1.25" fill="none" stroke-linecap="round" stroke-linejoin="round" />
<path d="M637.9 94.8 L640.6 97.5 L643.3000000000001 94.8" stroke="#e6e6e6" stroke-width="1.25" fill="none" stroke-linecap="round" stroke-linejoin="round" />
<path d="M647.9 120.8 L650.6 123.5 L653.3000000000001 120.8" stroke="#e6e6e6" stroke-width="1.25" fill="none" stroke-linecap="round" stroke-linejoin="round" />
<path d="M627.3 146.79999999999998 L630 149.5 L632.7 146.79999999999998" stroke="#e6e6e6" stroke-width="1.25" fill="none" stroke-linecap="round" stroke-linejoin="round" />
<path d="M1071.3 163.2 L1076.4 168 L1081.5 163.2" stroke="#f0f0f0" stroke-width="1.5" fill="none" stroke-linecap="round" stroke-linejoin="round" />
<path d="M504.3 88.6 V99.4 M500 92.8 L504.3 88.5 L508.6 92.8 M504.3 104.6 V115.5 M500 111.3 L504.3 115.6 L508.6 111.3" stroke="#3a96dd" stroke-width="1.3" fill="none" stroke-linecap="round" stroke-linejoin="round" />
<path d="M511.2 89.4 H527.8" stroke="#c8c8c8" stroke-width="1.1" fill="none" stroke-linecap="round" stroke-linejoin="round" />
<path d="M511.2 94.5 H527.8" stroke="#c8c8c8" stroke-width="1.1" fill="none" stroke-linecap="round" stroke-linejoin="round" />
<path d="M511.2 99.5 H527.8" stroke="#c8c8c8" stroke-width="1.1" fill="none" stroke-linecap="round" stroke-linejoin="round" />
<path d="M511.2 104.6 H527.8" stroke="#c8c8c8" stroke-width="1.1" fill="none" stroke-linecap="round" stroke-linejoin="round" />
<path d="M511.2 109.7 H527.8" stroke="#c8c8c8" stroke-width="1.1" fill="none" stroke-linecap="round" stroke-linejoin="round" />
<path d="M511.2 114.7 H527.8" stroke="#c8c8c8" stroke-width="1.1" fill="none" stroke-linecap="round" stroke-linejoin="round" />
<rect x="552.6" y="88.39999999999999" width="14.9" height="13" fill="none" stroke="#d6d6d6" stroke-width="1.2" rx="0" /><path d="M552.6 90.8 H567.5" stroke="#d6d6d6" stroke-width="1.0" fill="none" stroke-linecap="round" stroke-linejoin="round" />
<rect x="553.3" y="91.4" width="3.8" height="9.6" fill="#0b5fc0" stroke="none" stroke-width="1" rx="0" />
<path d="M557.6 91.2 V101" stroke="#3a96dd" stroke-width="1.0" fill="none" stroke-linecap="round" stroke-linejoin="round" stroke-linecap="butt"/>
<rect x="552.6" y="114.39999999999999" width="14.9" height="13" fill="none" stroke="#d6d6d6" stroke-width="1.2" rx="0" /><path d="M552.6 116.8 H567.5" stroke="#d6d6d6" stroke-width="1.0" fill="none" stroke-linecap="round" stroke-linejoin="round" />
<rect x="558.2" y="117.4" width="8.6" height="9.6" fill="#0b5fc0" stroke="none" stroke-width="1" rx="0" />
<path d="M557.6 117.2 V127" stroke="#3a96dd" stroke-width="1.0" fill="none" stroke-linecap="round" stroke-linejoin="round" />
<rect x="552.6" y="140.4" width="14.9" height="13" fill="none" stroke="#d6d6d6" stroke-width="1.2" rx="0" /><path d="M552.6 142.8 H567.5" stroke="#d6d6d6" stroke-width="1.0" fill="none" stroke-linecap="round" stroke-linejoin="round" />
<path d="M562.5 143.2 V153" stroke="#3a96dd" stroke-width="1.0" fill="none" stroke-linecap="round" stroke-linejoin="round" />
<rect x="564.2" y="144.4" width="2" height="2.4" fill="#3a96dd" stroke="none" stroke-width="1" rx="0" />
<rect x="564.2" y="148.1" width="2" height="1" fill="#3a96dd" stroke="none" stroke-width="1" rx="0" />
<rect x="564.2" y="150.3" width="2" height="1" fill="#3a96dd" stroke="none" stroke-width="1" rx="0" />
<path d="M686.904 97.516 V92.628 A5.096000000000001 5.2 0 0 1 697.096 92.628 V97.516 L698.968 99.284 V100.428 H685.032 V99.284 Z M689.92 101.052 A2.08 1.976 0 0 0 694.08 101.052" stroke="#dedede" stroke-width="1.25" fill="none" stroke-linecap="round" stroke-linejoin="round" />
<path d="M684.2 116.6 H690.4 M687.3 113.5 V119.7" stroke="#46c463" stroke-width="1.3" fill="none" stroke-linecap="round" stroke-linejoin="round" />
<path d="M692 114.8 H699.6 V128 H684.4 V121.2 M692 118 H699.6" stroke="#d6d6d6" stroke-width="1.2" fill="none" stroke-linecap="round" stroke-linejoin="round" />
<path d="M685.4 140.8 H699.6 V148 M684.4 143.6 H697.2 V147.6 M684.4 143.6 V152.4 H692 M684.4 146.2 H697.2" stroke="#d6d6d6" stroke-width="1.2" fill="none" stroke-linecap="round" stroke-linejoin="round" />
<path d="M693.8 148.8 L700 154.8 M700 148.8 L693.8 154.8" stroke="#e2493f" stroke-width="1.4" fill="none" stroke-linecap="round" stroke-linejoin="round" />
<path d="M884.5 106.8 V92.2 C884 90.4 882.5 89.5 880.5 89.5 H870.3 V111.5 H880.5 C882.5 111.5 883.6 112.4 884 113.8 M884.5 92.2 C885 90.4 886.5 89.5 888.5 89.5 H898.7 V102.6" stroke="#e0e0e0" stroke-width="1.3" fill="none" stroke-linecap="round" stroke-linejoin="round" />
<path d="M885.4 108.3 H888.6 L893.6 103.7 V117.5 L888.6 112.8 H885.4 Z" stroke="#3a96dd" stroke-width="1.3" fill="none" stroke-linecap="round" stroke-linejoin="round" />
<path d="M896.2 107 A5 5 0 0 1 896.2 114.2 M898.6 104.4 A8.6 8.6 0 0 1 898.6 116.8" stroke="#3a96dd" stroke-width="1.2" fill="none" stroke-linecap="round" stroke-linejoin="round" />
<rect x="147.5" y="335.5" width="15" height="14" fill="#f2f4f4" stroke="#141414" stroke-width="1.25" rx="0.3" /><path d="M147.5 338.5 H162.5 M150.5 334 V336.6 M159.5 334 V336.6" stroke="#141414" stroke-width="1.25" fill="none" stroke-linecap="round" stroke-linejoin="round" stroke-linecap="butt"/><rect x="152" y="343" width="2" height="2" fill="#141414" stroke="none" stroke-width="1" rx="0" />
<path d="M147.5 359.5 H162.5 V365 H156 V373.5 H147.5 Z" fill="#f2f4f4"/><path d="M149.8 373.5 H147.5 V359.5 H162.5 V363.8 M147.5 362.5 H162.5" stroke="#141414" stroke-width="1.25" fill="none" stroke-linecap="round" stroke-linejoin="round" stroke-linecap="butt"/><path d="M150.5 358 V360.6 M159.5 358 V360.6" stroke="#141414" stroke-width="1.25" fill="none" stroke-linecap="round" stroke-linejoin="round" stroke-linecap="butt"/><circle cx="154.7" cy="369.4" r="1.9" fill="none" stroke="#2f6fd0" stroke-width="1.2"/><path d="M151.5 373.9 A3.3 3 0 0 1 157.9 373.9" stroke="#2f6fd0" stroke-width="1.2" fill="none" stroke-linecap="round" stroke-linejoin="round" /><circle cx="159.8" cy="366.8" r="2" fill="none" stroke="#141414" stroke-width="1.1"/><path d="M161.3 368.4 L163.2 370.6" stroke="#141414" stroke-width="1.2" fill="none" stroke-linecap="round" stroke-linejoin="round" />
<path d="M147.5 383.5 H162.5 V389 H156 V397.5 H147.5 Z" fill="#f2f4f4"/><path d="M149.8 397.5 H147.5 V383.5 H162.5 V387.8 M147.5 386.5 H162.5" stroke="#141414" stroke-width="1.25" fill="none" stroke-linecap="round" stroke-linejoin="round" stroke-linecap="butt"/><path d="M150.5 382 V384.6 M159.5 382 V384.6" stroke="#141414" stroke-width="1.25" fill="none" stroke-linecap="round" stroke-linejoin="round" stroke-linecap="butt"/><circle cx="154.7" cy="393.4" r="1.9" fill="none" stroke="#2f6fd0" stroke-width="1.2"/><path d="M151.5 397.9 A3.3 3 0 0 1 157.9 397.9" stroke="#2f6fd0" stroke-width="1.2" fill="none" stroke-linecap="round" stroke-linejoin="round" /><circle cx="159.8" cy="390.8" r="2" fill="none" stroke="#141414" stroke-width="1.1"/><path d="M161.3 392.4 L163.2 394.6" stroke="#141414" stroke-width="1.2" fill="none" stroke-linecap="round" stroke-linejoin="round" />
<path d="M147.5 407.5 H162.5 V413 H156 V421.5 H147.5 Z" fill="#f2f4f4"/><path d="M149.8 421.5 H147.5 V407.5 H162.5 V411.8 M147.5 410.5 H162.5" stroke="#141414" stroke-width="1.25" fill="none" stroke-linecap="round" stroke-linejoin="round" stroke-linecap="butt"/><path d="M150.5 406 V408.6 M159.5 406 V408.6" stroke="#141414" stroke-width="1.25" fill="none" stroke-linecap="round" stroke-linejoin="round" stroke-linecap="butt"/><circle cx="154.7" cy="417.4" r="1.9" fill="none" stroke="#2f6fd0" stroke-width="1.2"/><path d="M151.5 421.9 A3.3 3 0 0 1 157.9 421.9" stroke="#2f6fd0" stroke-width="1.2" fill="none" stroke-linecap="round" stroke-linejoin="round" /><circle cx="159.8" cy="414.8" r="2" fill="none" stroke="#141414" stroke-width="1.1"/><path d="M161.3 416.4 L163.2 418.6" stroke="#141414" stroke-width="1.2" fill="none" stroke-linecap="round" stroke-linejoin="round" />
<path d="M147.5 431.5 H162.5 V437 H156 V445.5 H147.5 Z" fill="#f2f4f4"/><path d="M149.8 445.5 H147.5 V431.5 H162.5 V435.8 M147.5 434.5 H162.5" stroke="#141414" stroke-width="1.25" fill="none" stroke-linecap="round" stroke-linejoin="round" stroke-linecap="butt"/><path d="M150.5 430 V432.6 M159.5 430 V432.6" stroke="#141414" stroke-width="1.25" fill="none" stroke-linecap="round" stroke-linejoin="round" stroke-linecap="butt"/><circle cx="154.7" cy="441.4" r="1.9" fill="none" stroke="#2f6fd0" stroke-width="1.2"/><path d="M151.5 445.9 A3.3 3 0 0 1 157.9 445.9" stroke="#2f6fd0" stroke-width="1.2" fill="none" stroke-linecap="round" stroke-linejoin="round" /><circle cx="159.8" cy="438.8" r="2" fill="none" stroke="#141414" stroke-width="1.1"/><path d="M161.3 440.4 L163.2 442.6" stroke="#141414" stroke-width="1.2" fill="none" stroke-linecap="round" stroke-linejoin="round" />
<path d="M147.5 455.5 H162.5 V461 H156 V469.5 H147.5 Z" fill="#f2f4f4"/><path d="M149.8 469.5 H147.5 V455.5 H162.5 V459.8 M147.5 458.5 H162.5" stroke="#141414" stroke-width="1.25" fill="none" stroke-linecap="round" stroke-linejoin="round" stroke-linecap="butt"/><path d="M150.5 454 V456.6 M159.5 454 V456.6" stroke="#141414" stroke-width="1.25" fill="none" stroke-linecap="round" stroke-linejoin="round" stroke-linecap="butt"/><circle cx="154.7" cy="465.4" r="1.9" fill="none" stroke="#2f6fd0" stroke-width="1.2"/><path d="M151.5 469.9 A3.3 3 0 0 1 157.9 469.9" stroke="#2f6fd0" stroke-width="1.2" fill="none" stroke-linecap="round" stroke-linejoin="round" /><circle cx="159.8" cy="462.8" r="2" fill="none" stroke="#141414" stroke-width="1.1"/><path d="M161.3 464.4 L163.2 466.6" stroke="#141414" stroke-width="1.2" fill="none" stroke-linecap="round" stroke-linejoin="round" />
<path d="M147.5 479.5 H162.5 V485 H156 V493.5 H147.5 Z" fill="#f2f4f4"/><path d="M149.8 493.5 H147.5 V479.5 H162.5 V483.8 M147.5 482.5 H162.5" stroke="#141414" stroke-width="1.25" fill="none" stroke-linecap="round" stroke-linejoin="round" stroke-linecap="butt"/><path d="M150.5 478 V480.6 M159.5 478 V480.6" stroke="#141414" stroke-width="1.25" fill="none" stroke-linecap="round" stroke-linejoin="round" stroke-linecap="butt"/><circle cx="154.7" cy="489.4" r="1.9" fill="none" stroke="#2f6fd0" stroke-width="1.2"/><path d="M151.5 493.9 A3.3 3 0 0 1 157.9 493.9" stroke="#2f6fd0" stroke-width="1.2" fill="none" stroke-linecap="round" stroke-linejoin="round" /><circle cx="159.8" cy="486.8" r="2" fill="none" stroke="#141414" stroke-width="1.1"/><path d="M161.3 488.4 L163.2 490.6" stroke="#141414" stroke-width="1.2" fill="none" stroke-linecap="round" stroke-linejoin="round" />
<path d="M147.5 503.5 H162.5 V509 H156 V517.5 H147.5 Z" fill="#f2f4f4"/><path d="M149.8 517.5 H147.5 V503.5 H162.5 V507.8 M147.5 506.5 H162.5" stroke="#141414" stroke-width="1.25" fill="none" stroke-linecap="round" stroke-linejoin="round" stroke-linecap="butt"/><path d="M150.5 502 V504.6 M159.5 502 V504.6" stroke="#141414" stroke-width="1.25" fill="none" stroke-linecap="round" stroke-linejoin="round" stroke-linecap="butt"/><circle cx="154.7" cy="513.4" r="1.9" fill="none" stroke="#2f6fd0" stroke-width="1.2"/><path d="M151.5 517.9 A3.3 3 0 0 1 157.9 517.9" stroke="#2f6fd0" stroke-width="1.2" fill="none" stroke-linecap="round" stroke-linejoin="round" /><circle cx="159.8" cy="510.8" r="2" fill="none" stroke="#141414" stroke-width="1.1"/><path d="M161.3 512.4 L163.2 514.6" stroke="#141414" stroke-width="1.2" fill="none" stroke-linecap="round" stroke-linejoin="round" />
<path d="M147.5 527.5 H162.5 V533 H156 V541.5 H147.5 Z" fill="#f2f4f4"/><path d="M149.8 541.5 H147.5 V527.5 H162.5 V531.8 M147.5 530.5 H162.5" stroke="#141414" stroke-width="1.25" fill="none" stroke-linecap="round" stroke-linejoin="round" stroke-linecap="butt"/><path d="M150.5 526 V528.6 M159.5 526 V528.6" stroke="#141414" stroke-width="1.25" fill="none" stroke-linecap="round" stroke-linejoin="round" stroke-linecap="butt"/><circle cx="154.7" cy="537.4" r="1.9" fill="none" stroke="#2f6fd0" stroke-width="1.2"/><path d="M151.5 541.9 A3.3 3 0 0 1 157.9 541.9" stroke="#2f6fd0" stroke-width="1.2" fill="none" stroke-linecap="round" stroke-linejoin="round" /><circle cx="159.8" cy="534.8" r="2" fill="none" stroke="#141414" stroke-width="1.1"/><path d="M161.3 536.4 L163.2 538.6" stroke="#141414" stroke-width="1.2" fill="none" stroke-linecap="round" stroke-linejoin="round" />
<path d="M147.5 551.5 H162.5 V557 H156 V565.5 H147.5 Z" fill="#f2f4f4"/><path d="M149.8 565.5 H147.5 V551.5 H162.5 V555.8 M147.5 554.5 H162.5" stroke="#141414" stroke-width="1.25" fill="none" stroke-linecap="round" stroke-linejoin="round" stroke-linecap="butt"/><path d="M150.5 550 V552.6 M159.5 550 V552.6" stroke="#141414" stroke-width="1.25" fill="none" stroke-linecap="round" stroke-linejoin="round" stroke-linecap="butt"/><circle cx="154.7" cy="561.4" r="1.9" fill="none" stroke="#2f6fd0" stroke-width="1.2"/><path d="M151.5 565.9 A3.3 3 0 0 1 157.9 565.9" stroke="#2f6fd0" stroke-width="1.2" fill="none" stroke-linecap="round" stroke-linejoin="round" /><circle cx="159.8" cy="558.8" r="2" fill="none" stroke="#141414" stroke-width="1.1"/><path d="M161.3 560.4 L163.2 562.6" stroke="#141414" stroke-width="1.2" fill="none" stroke-linecap="round" stroke-linejoin="round" />
<rect x="147.5" y="575.5" width="15" height="14" fill="#f2f4f4" stroke="#141414" stroke-width="1.25" rx="0.3" /><path d="M147.5 578.5 H162.5 M150.5 574 V576.6 M159.5 574 V576.6" stroke="#141414" stroke-width="1.25" fill="none" stroke-linecap="round" stroke-linejoin="round" stroke-linecap="butt"/><rect x="152" y="583" width="2" height="2" fill="#141414" stroke="none" stroke-width="1" rx="0" />
<rect x="147.5" y="599.5" width="15" height="14" fill="#f2f4f4" stroke="#141414" stroke-width="1.25" rx="0.3" /><path d="M147.5 602.5 H162.5 M150.5 598 V600.6 M159.5 598 V600.6" stroke="#141414" stroke-width="1.25" fill="none" stroke-linecap="round" stroke-linejoin="round" stroke-linecap="butt"/><rect x="152" y="607" width="2" height="2" fill="#141414" stroke="none" stroke-width="1" rx="0" />
<rect x="147.5" y="623.5" width="15" height="14" fill="#f2f4f4" stroke="#141414" stroke-width="1.25" rx="0.3" /><path d="M147.5 626.5 H162.5 M150.5 622 V624.6 M159.5 622 V624.6" stroke="#141414" stroke-width="1.25" fill="none" stroke-linecap="round" stroke-linejoin="round" stroke-linecap="butt"/><rect x="152" y="631" width="2" height="2" fill="#141414" stroke="none" stroke-width="1" rx="0" />
<path d="M126.19999999999999 632.3 V627.6 A4.9 5.0 0 0 1 136.0 627.6 V632.3 L137.79999999999998 634.0 V635.1 H124.39999999999999 V634.0 Z M129.1 635.6999999999999 A2.0 1.9 0 0 0 133.1 635.6999999999999" stroke="#141414" stroke-width="1.2" fill="#f2f4f4" stroke-linecap="round" stroke-linejoin="round" />
<path d="M118.2 316.6 L122.2 321 L126.2 316.6" stroke="#ececec" stroke-width="1.5" fill="none" stroke-linecap="round" stroke-linejoin="round" />
<rect x="841.1" y="853.5" width="13.8" height="11" fill="none" stroke="#f0f0f0" stroke-width="1.3" rx="0" />
<path d="M841.1 856.6 H854.9 M844.8 856.6 V864.5 M851.4 856.6 V864.5" stroke="#f0f0f0" stroke-width="1.2" fill="none" stroke-linecap="round" stroke-linejoin="round" />
<path d="M887.6 853.6 V864.4 M887.6 853.6 C885.6 852.4 883.4 852.4 881.4 852.6 V863 C883.4 862.8 885.6 863 887.6 864.4 M887.6 853.6 C889.6 852.4 891.8 852.4 893.8 852.6 V863 C891.8 862.8 889.6 863 887.6 864.4" stroke="#f0f0f0" stroke-width="1.2" fill="none" stroke-linecap="round" stroke-linejoin="round" />
<path d="M883.2 855.4 H885.8 M883.2 857.8 H885.8 M883.2 860.2 H885.8 M889.4 855.4 H892 M889.4 857.8 H892 M889.4 860.2 H892" stroke="#f0f0f0" stroke-width="0.9" fill="none" stroke-linecap="round" stroke-linejoin="round" />
<path d="M914 858.5 H922 M1031.8 858.5 H1040 M1035.9 854.5 V862.5" stroke="#8c8c8c" stroke-width="1.1" fill="none" stroke-linecap="round" stroke-linejoin="round" />
<path d="M927 859.5 H1026.8 M977.5 856 V863" stroke="#e4e4e4" stroke-width="1.0" fill="none" stroke-linecap="round" stroke-linejoin="round" />
</svg>
<div class="a" style="left:70px;top:159px;width:313px;height:155px;background:#484848;border:1px solid #9a9a9a;border-radius:4px;box-shadow:0 2px 6px rgba(0,0,0,.35)"></div>
<div class="a" style="left:224px;top:161px;width:76px;height:56px;background:#575757;border:1px solid #8c8c8c"></div>
<div class="a" style="left:108px;top:226px;width:273px;height:1px;background:#7a7a7a;"></div>
<span class="t" style="left:87.6px;top:197.34px;font-size:12px;line-height:16px;color:#f2f2f2;letter-spacing:-0.443px">Calendar</span>
<span class="t" style="left:165.3px;top:197.34px;font-size:12px;line-height:16px;color:#f2f2f2;letter-spacing:-0.365px">Preview</span>
<span class="t" style="left:253.3px;top:197.34px;font-size:12px;line-height:16px;color:#f2f2f2;letter-spacing:-0.396px">List</span>
<span class="t" style="left:320.9px;top:197.34px;font-size:12px;line-height:16px;color:#f2f2f2;letter-spacing:0.083px">Active</span>
<span class="t" style="left:109.2px;top:234.34px;font-size:12px;line-height:16px;color:#f2f2f2;letter-spacing:-0.293px"><u>M</u>anage Views...</span>
<span class="t" style="left:109.2px;top:262.14px;font-size:12px;line-height:16px;color:#f2f2f2;letter-spacing:-0.268px"><u>S</u>ave Current View As a New View...</span>
<span class="t" style="left:109.2px;top:290.14px;font-size:12px;line-height:16px;color:#f2f2f2;letter-spacing:-0.136px"><u>A</u>pply Current View to Other Calendar Folders...</span>
<svg width="1103" height="873" viewBox="0 0 1103 873" fill="none">
<rect x="97.3" y="170.3" width="25.6" height="21.4" fill="#c9d3e8" stroke="#aebbd8" stroke-width="0.8" rx="0" /><rect x="97.3" y="170.3" width="25.6" height="4.9" fill="#6f98ec"/><rect x="97.3" y="170.3" width="25.6" height="1.6" fill="#8fb0f2"/><rect x="100.9" y="169.5" width="2" height="3.8" rx="1" fill="#ffffff" stroke="#5a6c94" stroke-width="0.5"/><rect x="105.0" y="169.5" width="2" height="3.8" rx="1" fill="#ffffff" stroke="#5a6c94" stroke-width="0.5"/><rect x="109.1" y="169.5" width="2" height="3.8" rx="1" fill="#ffffff" stroke="#5a6c94" stroke-width="0.5"/><rect x="113.2" y="169.5" width="2" height="3.8" rx="1" fill="#ffffff" stroke="#5a6c94" stroke-width="0.5"/><rect x="117.3" y="169.5" width="2" height="3.8" rx="1" fill="#ffffff" stroke="#5a6c94" stroke-width="0.5"/><rect x="98.20" y="176.00" width="3.88" height="2.98" fill="#fbfcff"/><rect x="103.08" y="176.00" width="3.88" height="2.98" fill="#fbfcff"/><rect x="107.96" y="176.00" width="3.88" height="2.98" fill="#fbfcff"/><rect x="112.84" y="176.00" width="3.88" height="2.98" fill="#fbfcff"/><rect x="117.72" y="176.00" width="3.88" height="2.98" fill="#fbfcff"/><rect x="98.20" y="179.88" width="3.88" height="2.98" fill="#fbfcff"/><rect x="103.08" y="179.88" width="3.88" height="2.98" fill="#fbfcff"/><rect x="107.96" y="179.88" width="3.88" height="2.98" fill="#fbfcff"/><rect x="112.84" y="179.88" width="3.88" height="2.98" fill="#fbfcff"/><rect x="117.72" y="179.88" width="3.88" height="2.98" fill="#fbfcff"/><rect x="98.20" y="183.75" width="3.88" height="2.98" fill="#fbfcff"/><rect x="103.08" y="183.75" width="3.88" height="2.98" fill="#fbfcff"/><rect x="107.96" y="183.75" width="3.88" height="2.98" fill="#fbfcff"/><rect x="112.84" y="183.75" width="3.88" height="2.98" fill="#fbfcff"/><rect x="117.72" y="183.75" width="3.88" height="2.98" fill="#fbfcff"/><rect x="98.20" y="187.63" width="3.88" height="2.98" fill="#fbfcff"/><rect x="103.08" y="187.63" width="3.88" height="2.98" fill="#fbfcff"/><rect x="107.96" y="187.63" width="3.88" height="2.98" fill="#fbfcff"/><rect x="112.84" y="187.63" width="3.88" height="2.98" fill="#fbfcff"/><rect x="117.72" y="187.63" width="3.88" height="2.98" fill="#fbfcff"/>
<rect x="112.5" y="179.5" width="5" height="4" fill="#ffffff" stroke="#e2481c" stroke-width="1.1" rx="0" />
<rect x="172.3" y="168.7" width="25.4" height="20.8" fill="#c9d3e8" stroke="#aebbd8" stroke-width="0.8" rx="0" /><rect x="172.3" y="168.7" width="25.4" height="4.9" fill="#6f98ec"/><rect x="172.3" y="168.7" width="25.4" height="1.6" fill="#8fb0f2"/><rect x="175.9" y="167.89999999999998" width="2" height="3.8" rx="1" fill="#ffffff" stroke="#5a6c94" stroke-width="0.5"/><rect x="180.0" y="167.89999999999998" width="2" height="3.8" rx="1" fill="#ffffff" stroke="#5a6c94" stroke-width="0.5"/><rect x="184.0" y="167.89999999999998" width="2" height="3.8" rx="1" fill="#ffffff" stroke="#5a6c94" stroke-width="0.5"/><rect x="188.1" y="167.89999999999998" width="2" height="3.8" rx="1" fill="#ffffff" stroke="#5a6c94" stroke-width="0.5"/><rect x="192.1" y="167.89999999999998" width="2" height="3.8" rx="1" fill="#ffffff" stroke="#5a6c94" stroke-width="0.5"/><rect x="173.20" y="174.40" width="3.84" height="2.83" fill="#fbfcff"/><rect x="178.04" y="174.40" width="3.84" height="2.83" fill="#fbfcff"/><rect x="182.88" y="174.40" width="3.84" height="2.83" fill="#fbfcff"/><rect x="187.72" y="174.40" width="3.84" height="2.83" fill="#fbfcff"/><rect x="192.56" y="174.40" width="3.84" height="2.83" fill="#fbfcff"/><rect x="173.20" y="178.12" width="3.84" height="2.83" fill="#fbfcff"/><rect x="178.04" y="178.12" width="3.84" height="2.83" fill="#fbfcff"/><rect x="182.88" y="178.12" width="3.84" height="2.83" fill="#fbfcff"/><rect x="187.72" y="178.12" width="3.84" height="2.83" fill="#fbfcff"/><rect x="192.56" y="178.12" width="3.84" height="2.83" fill="#fbfcff"/><rect x="173.20" y="181.85" width="3.84" height="2.83" fill="#fbfcff"/><rect x="178.04" y="181.85" width="3.84" height="2.83" fill="#fbfcff"/><rect x="182.88" y="181.85" width="3.84" height="2.83" fill="#fbfcff"/><rect x="187.72" y="181.85" width="3.84" height="2.83" fill="#fbfcff"/><rect x="192.56" y="181.85" width="3.84" height="2.83" fill="#fbfcff"/><rect x="173.20" y="185.58" width="3.84" height="2.83" fill="#fbfcff"/><rect x="178.04" y="185.58" width="3.84" height="2.83" fill="#fbfcff"/><rect x="182.88" y="185.58" width="3.84" height="2.83" fill="#fbfcff"/><rect x="187.72" y="185.58" width="3.84" height="2.83" fill="#fbfcff"/><rect x="192.56" y="185.58" width="3.84" height="2.83" fill="#fbfcff"/>
<circle cx="190.7" cy="183" r="5.3" fill="rgba(205,222,244,.8)" stroke="#a4b0c2" stroke-width="1.2"/>
<path d="M187.6 180.4 A4 4 0 0 1 191.4 178.8" stroke="#ffffff" stroke-width="1" fill="none" opacity=".8"/>
<path d="M194.6 187.2 L199.8 194.2" stroke="#8a8a8a" stroke-width="1.8" fill="none" stroke-linecap="round" stroke-linejoin="round" />
<rect x="248.3" y="168.3" width="27.4" height="25.2" fill="#fbfcfe" stroke="#b4c0dc" stroke-width="1" rx="0" /><path d="M251.70000000000002 172.7 H255.70000000000002 M257.5 172.7 H265.3 M267.3 172.7 H273.90000000000003" stroke="#8c8c96" stroke-width="1.1"/><path d="M251.70000000000002 175.6 H255.70000000000002 M257.5 175.6 H265.3 M267.3 175.6 H273.90000000000003" stroke="#8c8c96" stroke-width="1.1"/><path d="M251.70000000000002 178.6 H255.70000000000002 M257.5 178.6 H265.3 M267.3 178.6 H273.90000000000003" stroke="#8c8c96" stroke-width="1.1"/><path d="M251.70000000000002 181.5 H255.70000000000002 M257.5 181.5 H265.3 M267.3 181.5 H273.90000000000003" stroke="#8c8c96" stroke-width="1.1"/><path d="M251.70000000000002 184.4 H255.70000000000002 M257.5 184.4 H265.3 M267.3 184.4 H273.90000000000003" stroke="#8c8c96" stroke-width="1.1"/><path d="M251.70000000000002 187.4 H255.70000000000002 M257.5 187.4 H265.3 M267.3 187.4 H273.90000000000003" stroke="#8c8c96" stroke-width="1.1"/>
<rect x="322.2" y="168.3" width="27.4" height="25.2" fill="#fbfcfe" stroke="#b4c0dc" stroke-width="1" rx="0" /><path d="M325.59999999999997 172.7 H329.59999999999997 M331.4 172.7 H339.2 M341.2 172.7 H347.8" stroke="#8c8c96" stroke-width="1.1"/><path d="M325.59999999999997 175.6 H329.59999999999997 M331.4 175.6 H339.2 M341.2 175.6 H347.8" stroke="#8c8c96" stroke-width="1.1"/><path d="M325.59999999999997 178.6 H329.59999999999997 M331.4 178.6 H339.2 M341.2 178.6 H347.8" stroke="#8c8c96" stroke-width="1.1"/><path d="M325.59999999999997 181.5 H329.59999999999997 M331.4 181.5 H339.2 M341.2 181.5 H347.8" stroke="#8c8c96" stroke-width="1.1"/><path d="M325.59999999999997 184.4 H329.59999999999997 M331.4 184.4 H339.2 M341.2 184.4 H347.8" stroke="#8c8c96" stroke-width="1.1"/><path d="M325.59999999999997 187.4 H329.59999999999997 M331.4 187.4 H339.2 M341.2 187.4 H347.8" stroke="#8c8c96" stroke-width="1.1"/>
<path d="M338.6 190.4 L343.2 195 L353.2 184.6" stroke="#1fae22" stroke-width="2.8" fill="none" stroke-linecap="round" stroke-linejoin="round" />
</svg>
<svg width="1103" height="873" viewBox="0 0 1103 873" fill="none" font-family="Liberation Sans, sans-serif">
<path d="M52.1 69.3 L45.3 84.3 L40.7 79.3 L37.4 103.3 L54.2 85.9 L47.4 85.4 L55.1 70.7 Z" fill="#ef3b3b" stroke="#ef3b3b" stroke-width="0.6" stroke-linejoin="round"/>
<circle cx="59.1" cy="54" r="18.1" fill="#ef3b3b" stroke="none" stroke-width="1"/><text x="59.1" y="62.8" text-anchor="middle" font-size="24.4" font-weight="700" fill="#ffffff">1</text>
<path d="M91.0 209.9 L89.0 176.8 L95.3 179.5 L86.6 157.1 L79.7 180.1 L85.8 176.9 L86.4 210.1 Z" fill="#ef3b3b" stroke="#ef3b3b" stroke-width="0.6" stroke-linejoin="round"/>
<circle cx="90" cy="226.5" r="18.1" fill="#ef3b3b" stroke="none" stroke-width="1"/><text x="89.1" y="235.3" text-anchor="middle" font-size="24.4" font-weight="700" fill="#ffffff">2</text>
<path d="M254.0 239.9 L218.9 239.9 L222.3 233.8 L199.0 241.4 L222.1 249.8 L218.9 243.5 L254.0 244.7 Z" fill="#ef3b3b" stroke="#ef3b3b" stroke-width="0.6" stroke-linejoin="round"/>
<circle cx="270.1" cy="243.2" r="18.1" fill="#ef3b3b" stroke="none" stroke-width="1"/><text x="269.20000000000005" y="252.0" text-anchor="middle" font-size="24.4" font-weight="700" fill="#ffffff">3</text>
</svg>
</div></div>
</body></html>
